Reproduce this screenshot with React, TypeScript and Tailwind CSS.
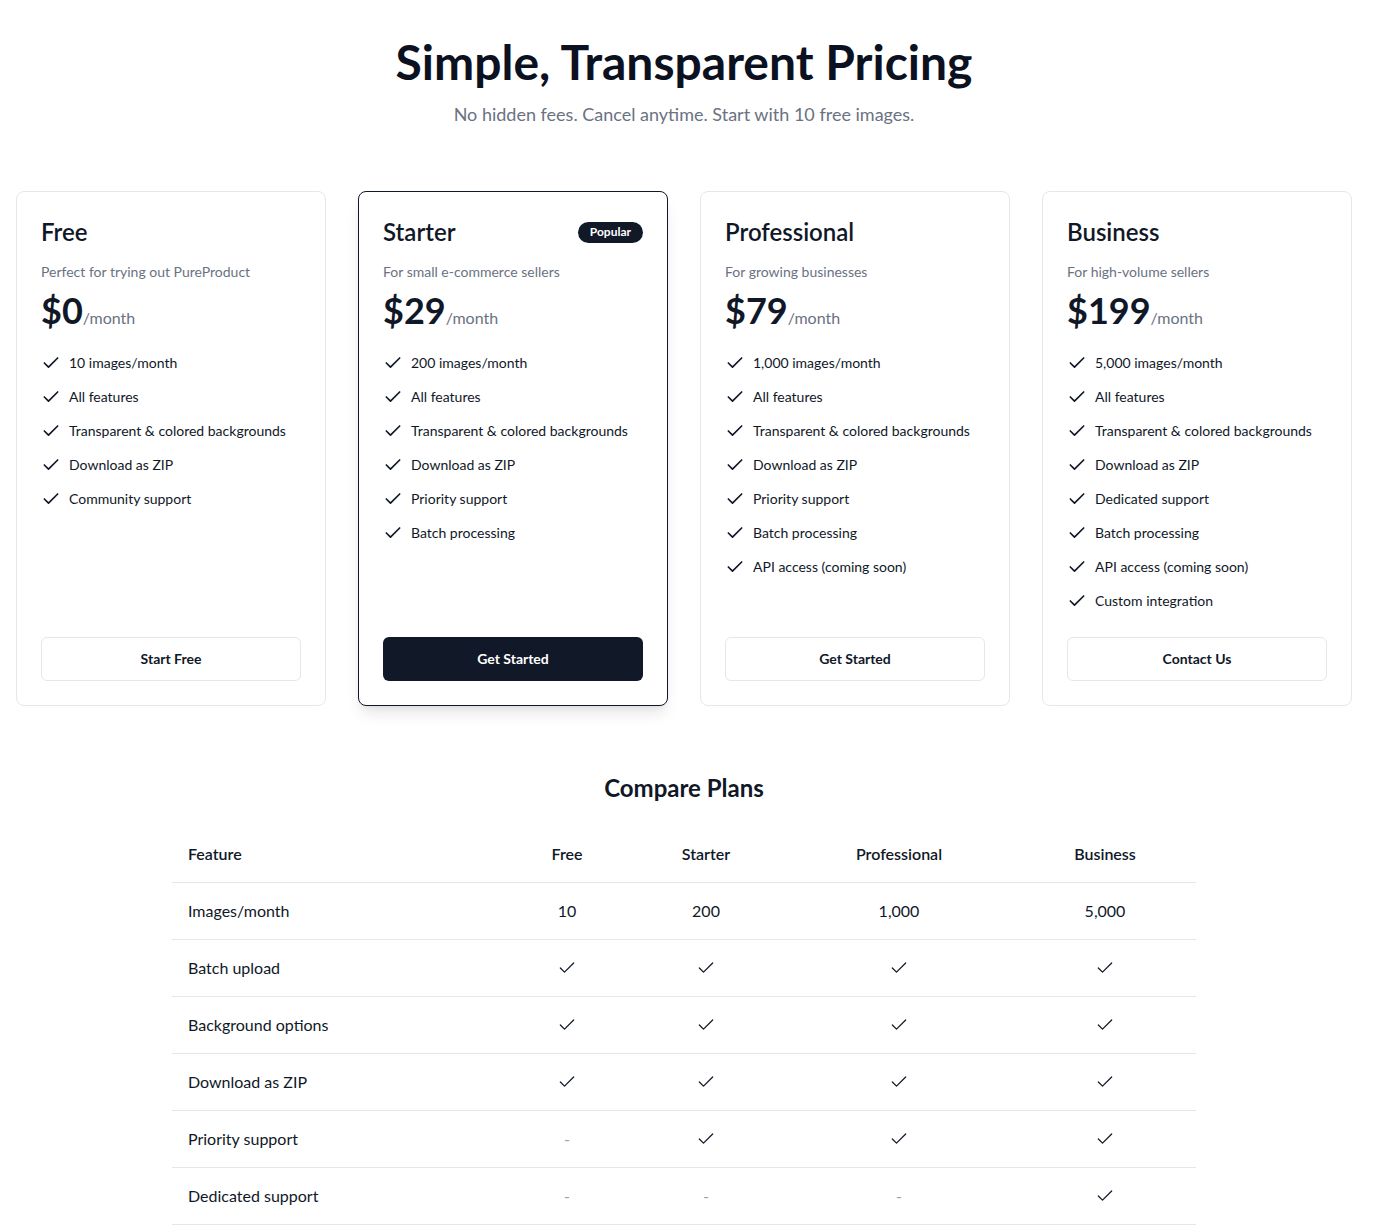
import { Check } from 'lucide-react';

type Plan = {
  name: string;
  description: string;
  price: string;
  features: string[];
  cta: string;
  popular?: boolean;
};

const plans: Plan[] = [
  {
    name: 'Free',
    description: 'Perfect for trying out PureProduct',
    price: '$0',
    features: ['10 images/month', 'All features', 'Transparent & colored backgrounds', 'Download as ZIP', 'Community support'],
    cta: 'Start Free',
  },
  {
    name: 'Starter',
    description: 'For small e-commerce sellers',
    price: '$29',
    features: ['200 images/month', 'All features', 'Transparent & colored backgrounds', 'Download as ZIP', 'Priority support', 'Batch processing'],
    cta: 'Get Started',
    popular: true,
  },
  {
    name: 'Professional',
    description: 'For growing businesses',
    price: '$79',
    features: ['1,000 images/month', 'All features', 'Transparent & colored backgrounds', 'Download as ZIP', 'Priority support', 'Batch processing', 'API access (coming soon)'],
    cta: 'Get Started',
  },
  {
    name: 'Business',
    description: 'For high-volume sellers',
    price: '$199',
    features: ['5,000 images/month', 'All features', 'Transparent & colored backgrounds', 'Download as ZIP', 'Dedicated support', 'Batch processing', 'API access (coming soon)', 'Custom integration'],
    cta: 'Contact Us',
  },
];

const rows: { label: string; values: (string | boolean)[] }[] = [
  { label: 'Images/month', values: ['10', '200', '1,000', '5,000'] },
  { label: 'Batch upload', values: [true, true, true, true] },
  { label: 'Background options', values: [true, true, true, true] },
  { label: 'Download as ZIP', values: [true, true, true, true] },
  { label: 'Priority support', values: [false, true, true, true] },
  { label: 'Dedicated support', values: [false, false, false, true] },
];

const colWidths = ['w-[122px]', 'w-[156px]', 'w-[230px]', 'w-[182px]'];

function PlanCard({ plan }: { plan: Plan }) {
  return (
    <div
      className={
        plan.popular
          ? 'flex flex-col rounded-lg border border-gray-900 bg-white p-6 shadow-lg'
          : 'flex flex-col rounded-lg border border-gray-200 bg-white p-6'
      }
    >
      <div className="flex items-center justify-between">
        <h3 className="text-2xl font-semibold leading-8 text-gray-900">{plan.name}</h3>
        {plan.popular && (
          <span className="flex h-[21px] items-center rounded-full bg-[#111827] px-3 text-xs font-bold text-white">Popular</span>
        )}
      </div>
      <p className="mt-[14px] text-sm leading-5 text-gray-500">{plan.description}</p>
      <div className="mt-2 flex items-baseline">
        <span className="text-4xl font-bold leading-10 text-gray-900">{plan.price}</span>
        <span className="text-base text-gray-500">/month</span>
      </div>
      <ul className="mt-[23px] mb-[26px] flex flex-col gap-[14px]">
        {plan.features.map((f) => (
          <li key={f} className="flex h-5 items-center gap-2 whitespace-nowrap text-sm leading-5 text-gray-900">
            <Check className="h-5 w-5 shrink-0 text-gray-900" strokeWidth={2} />
            {f}
          </li>
        ))}
      </ul>
      <button
        className={
          plan.popular
            ? 'mt-auto h-11 w-full rounded-md bg-[#111827] text-sm font-bold text-white'
            : 'mt-auto h-11 w-full rounded-md border border-gray-200 bg-white text-sm font-bold text-gray-900'
        }
      >
        {plan.cta}
      </button>
    </div>
  );
}

export default function App() {
  return (
    <div className="min-h-screen bg-white font-['Lato',sans-serif] text-gray-900">
      <div className="w-[1368px] px-4 pb-16 pt-[38px]">
        <div className="text-center">
          <h1 className="text-5xl font-bold leading-[48px] text-[#0b1120]">Simple, Transparent Pricing</h1>
          <p className="mt-[14px] text-lg leading-7 text-gray-500">No hidden fees. Cancel anytime. Start with 10 free images.</p>
        </div>

        <div className="mt-[63px] grid grid-cols-4 gap-8">
          {plans.map((p) => (
            <PlanCard key={p.name} plan={p} />
          ))}
        </div>

        <h2 className="mt-[66px] text-center text-2xl font-bold leading-8 text-gray-900">Compare Plans</h2>

        <table className="mx-auto mt-[22px] w-[1024px] border-collapse text-base">
          <thead>
            <tr className="border-b border-gray-200">
              <th className="w-[334px] px-4 py-4 text-left font-semibold leading-6">Feature</th>
              {['Free', 'Starter', 'Professional', 'Business'].map((h, i) => (
                <th key={h} className={`${colWidths[i]} px-4 py-4 text-center font-semibold leading-6`}>
                  {h}
                </th>
              ))}
            </tr>
          </thead>
          <tbody>
            {rows.map((r) => (
              <tr key={r.label} className="border-b border-gray-200">
                <td className="px-4 py-4 leading-6">{r.label}</td>
                {r.values.map((v, i) => (
                  <td key={i} className="px-4 py-4 text-center leading-6">
                    {v === true ? (
                      <Check className="mx-auto h-5 w-5 text-gray-900" strokeWidth={1.5} />
                    ) : v === false ? (
                      <span className="text-gray-400">-</span>
                    ) : (
                      v
                    )}
                  </td>
                ))}
              </tr>
            ))}
          </tbody>
        </table>
      </div>
    </div>
  );
}
